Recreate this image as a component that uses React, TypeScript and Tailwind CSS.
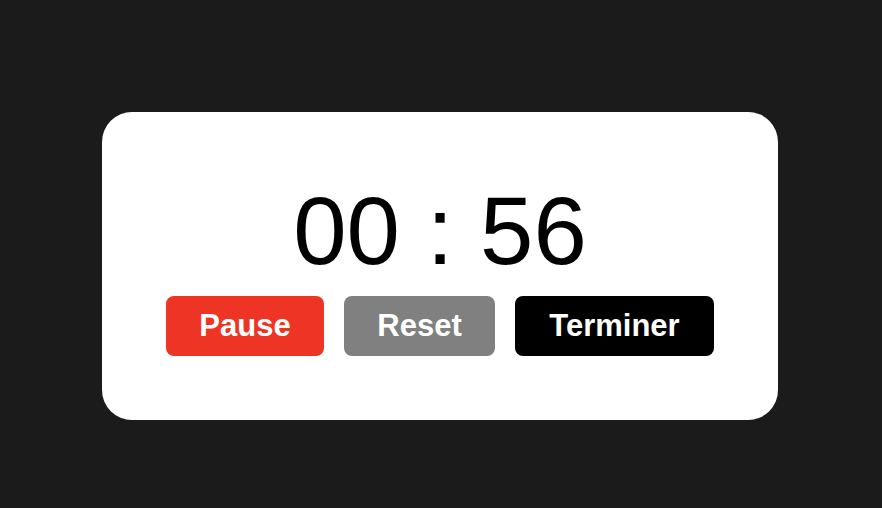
function TimerButton({ label, className }: { label: string; className: string }) {
	return (
		<button
			type="button"
			className={`h-[60px] rounded-[8px] text-[31px] font-bold text-white ${className}`}
		>
			{label}
		</button>
	);
}

export default function App() {
	return (
		<div className="flex h-[508px] w-full justify-center bg-[#1b1b1b] pr-[2px] pt-[112px] font-['Liberation_Sans',Arial,sans-serif]">
			<div className="flex h-[308px] w-[676px] flex-col items-center rounded-[30px] bg-white pt-[61px]">
				<div className="text-[96px] leading-[115px] text-black">00 : 56</div>
				<div className="mt-[8px] flex gap-5">
					<TimerButton label="Pause" className="w-[158px] bg-[#ee3424]" />
					<TimerButton label="Reset" className="w-[151px] bg-[#808080]" />
					<TimerButton label="Terminer" className="w-[199px] bg-black" />
				</div>
			</div>
		</div>
	);
}
